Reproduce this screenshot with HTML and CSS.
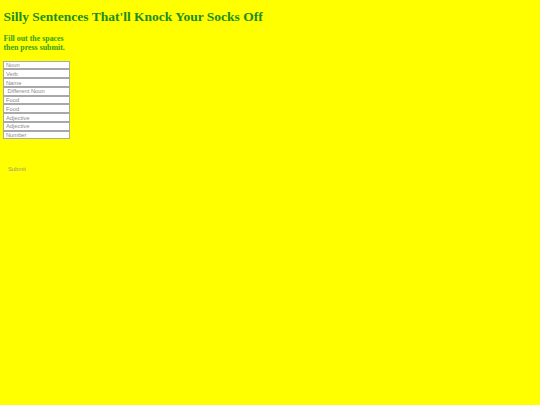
FILE: index.html
```html
<!DOCTYPE html>
<html>
<head>
<meta charset="utf-8">
<link rel="stylesheet" href="styles.css">
</head>
<body>
<h1 class="title">Silly Sentences That'll Knock Your Socks Off</h1>
<h3 class="intro">Fill out the spaces<br>then press submit.</h3>
<form class="form">
<div class="fields">
<input class="field" type="text" placeholder="Noun">
<input class="field" type="text" placeholder="Verb">
<input class="field" type="text" placeholder="Name">
<input class="field" type="text" placeholder=" Different Noun">
<input class="field" type="text" placeholder="Food">
<input class="field" type="text" placeholder="Food">
<input class="field" type="text" placeholder="Adjective">
<input class="field" type="text" placeholder="Adjective">
<input class="field" type="text" placeholder="Number">
</div>
<button class="submit" type="button">Submit</button>
</form>
</body>
</html>
```
FILE: styles.css
```css
html, body {
  background: #ffff00;
}
body {
  margin: 0 3.4px;
  padding-top: 0.1px;
  font-family: "Liberation Serif", serif;
}
.title {
  font-size: 13.5px;
  font-weight: bold;
  color: #208c20;
  margin: 9px 0 0;
  line-height: 15.5px;
}
.intro {
  font-size: 7.9px;
  line-height: 9px;
  font-weight: bold;
  color: #33a21a;
  margin: 9px 0 0;
}
.form {
  margin: 9px 0 0;
}
.fields {
  display: flex;
  flex-direction: column;
  align-items: flex-start;
}
.field {
  box-sizing: border-box;
  width: 67px;
  height: 8.78px;
  margin: 0;
  padding: 0 1.5px;
  border: 1px solid #a8a8a8;
  background: #ffffff;
  font-family: "Liberation Sans", sans-serif;
  font-size: 5.8px;
  line-height: 6.5px;
  color: #333;
  outline: none;
}
.field::placeholder {
  color: #8a8a8a;
}
.submit {
  display: block;
  margin: 27px 0 0;
  padding: 0 4.5px;
  border: none;
  background: transparent;
  font-family: "Liberation Sans", sans-serif;
  font-size: 5.8px;
  line-height: 6.5px;
  color: #9a9a70;
}
```
